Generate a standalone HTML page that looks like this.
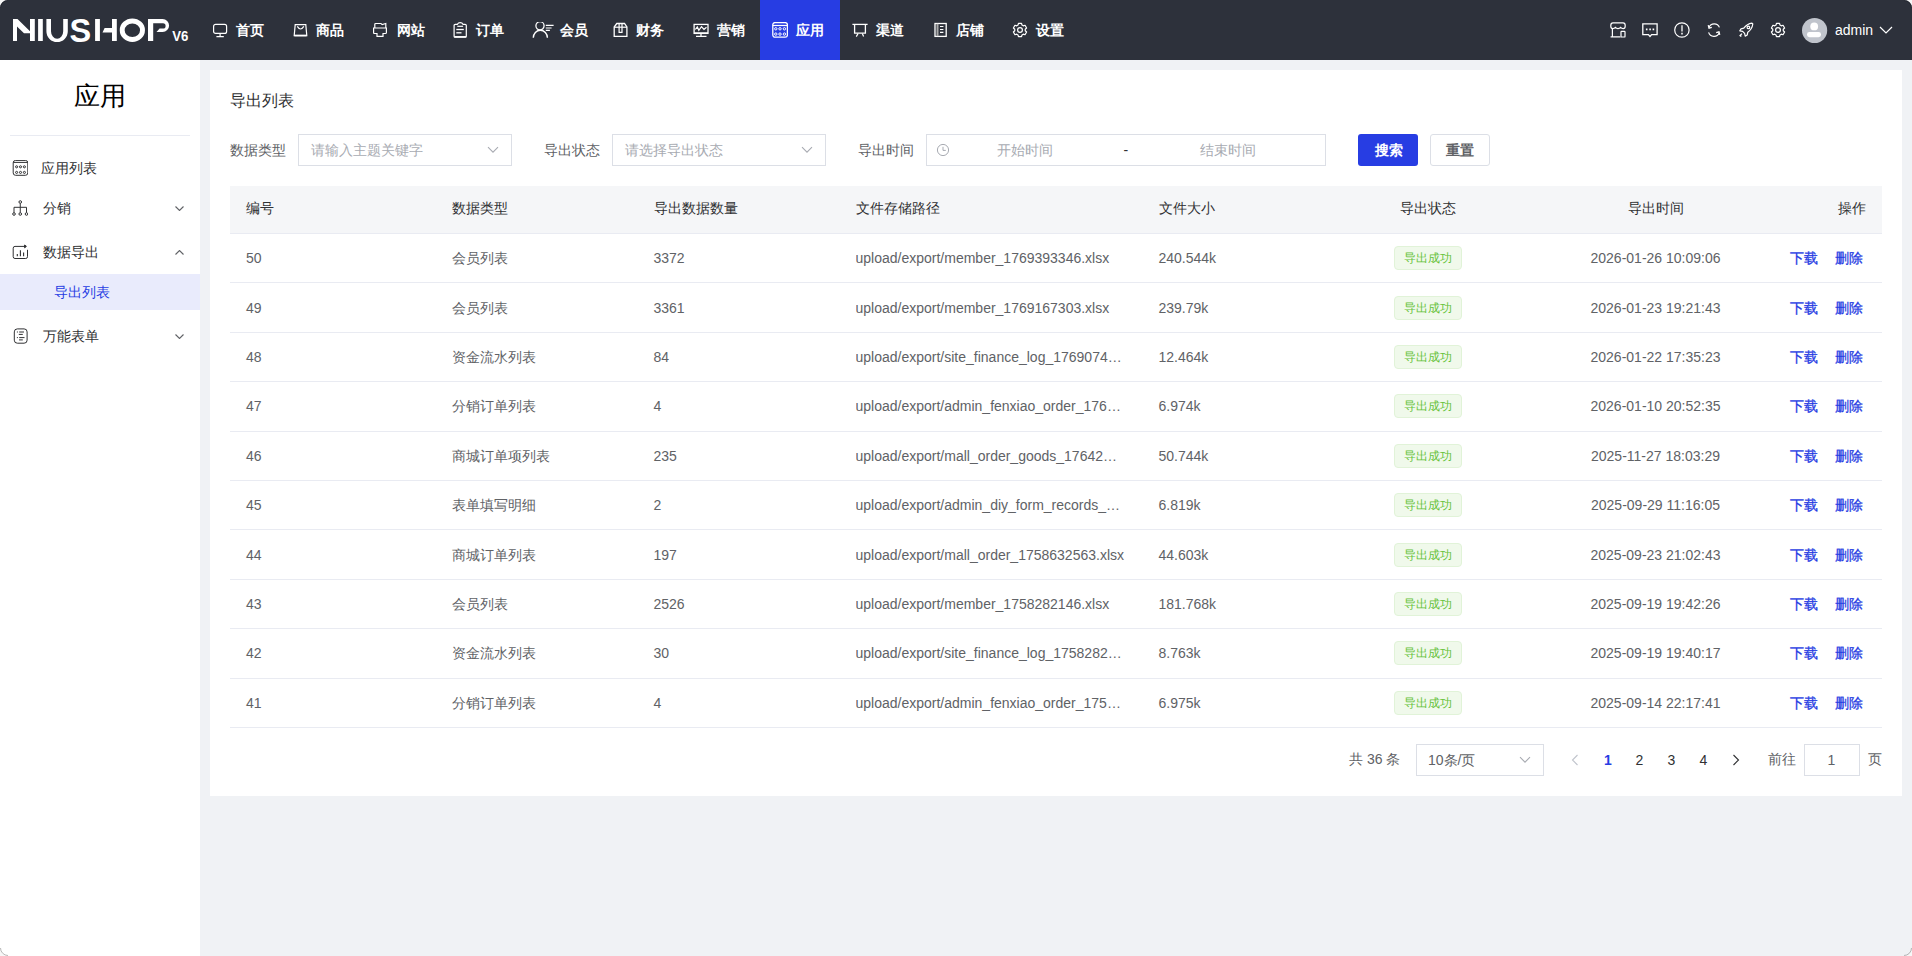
<!DOCTYPE html>
<html><head><meta charset="utf-8">
<style>
*{box-sizing:border-box;margin:0;padding:0}
html,body{width:1912px;height:956px;overflow:hidden}
body{font-family:"Liberation Sans",sans-serif;font-size:14px;color:#303133;background:#f0f2f5;position:relative}
.abs{position:absolute}
.t{position:absolute;white-space:nowrap;line-height:20px}
#hdr{position:absolute;left:0;top:0;width:1912px;height:60px;background:#2d313b}
.nav{position:absolute;top:0;height:60px;width:80px;color:#fff}
.nav.on{background:#273de3}
.nav svg{position:absolute;top:22px;width:16px;height:16px;fill:none;stroke:#fff;stroke-width:1.2}
.nav span{position:absolute;top:20px;line-height:20px;font-size:14px;font-weight:600}
.ri{position:absolute;top:22px;width:16px;height:16px;fill:none;stroke:#fff;stroke-width:1.2}
#side{position:absolute;left:0;top:60px;width:200px;height:896px;background:#fff}
.mi{position:absolute;left:0;width:200px;height:20px}
.mi svg{position:absolute;left:12px;top:2px;width:16px;height:16px;fill:none;stroke:#303133;stroke-width:1}
.mi span{position:absolute;left:43px;top:0;line-height:20px;color:#303133}
.chev{position:absolute;left:175px;width:9px;height:5px;fill:none;stroke:#606266;stroke-width:1.1}
#card{position:absolute;left:210px;top:70px;width:1692px;height:726px;background:#fff}
.lbl{color:#606266}
.inp{position:absolute;top:134px;height:32px;border:1px solid #dcdfe6;background:#fff}
.ph{color:#a8abb2}
.th{color:#303133;font-weight:400}
.td{color:#606266}
.path{width:269px;overflow:hidden;text-overflow:ellipsis}
.tag{position:absolute;width:68px;height:24px;border:1px solid #e1f3d8;background:#f0f9eb;border-radius:4px;color:#67c23a;font-size:12px;line-height:22px;text-align:center}
.op{color:#273de3;font-weight:400;-webkit-text-stroke:0.3px #273de3}
</style></head><body>
<div id="hdr">
<svg class="abs" style="left:0;top:0" width="200" height="60" viewBox="0 0 200 60">
<g fill="#fff">
<path d="M13 19H17.5L30 31.2V33.2H24L17 26.4V41H13Z"/>
<rect x="30" y="19" width="4.8" height="22"/>
<path d="M46.4 19V31.3A10.7 10.8 0 0 0 67.8 31.3V19H63.2V31.3A6.1 7.5 0 0 1 51 31.3V19Z"/>
<rect x="38.1" y="19" width="4.7" height="22"/>
<rect x="95.1" y="19" width="4.8" height="22"/>
<path d="M102.5 32.6L104.6 28H112V32.6Z"/>
<rect x="112" y="19" width="4.8" height="22"/>
<rect x="148" y="19" width="5.2" height="22"/>
<path d="M148 19H162.6A6.5 6.5 0 0 1 162.6 32H156.5L159.6 28.5H163A2.6 2.6 0 0 0 163 23.3H148Z"/>
</g>
<g fill="none" stroke="#fff">

<ellipse cx="132.35" cy="30.2" rx="10.15" ry="9.25" stroke-width="4.9"/>
</g>
<text x="69.6" y="41.6" font-family="Liberation Sans" font-weight="700" font-size="32.5" fill="#fff">S</text>
<text x="0" y="42" font-family="Liberation Sans" font-weight="700" font-size="15" fill="#fff" transform="translate(172.2 -0.8) scale(0.88 1)">V6</text>
</svg>

<div class="nav" style="left:200px"><svg style="left:12px" viewBox="0 0 16 16"><rect x="1.6" y="2.4" width="13" height="9" rx="2"/><path d="M8.1 11.4V14.4M4.4 14.6H11.8"/></svg><span style="left:36px">首页</span></div>
<div class="nav" style="left:280px"><svg style="left:13px" viewBox="0 0 16 16"><path d="M2.2 2.6H12.8L13.8 13.6H1.2Z"/><path d="M1.4 13.5H13.6" stroke-width="1.7"/><path d="M4.3 4.4Q7.55 9.6 10.8 4.4"/></svg><span style="left:36.4px">商品</span></div>
<div class="nav" style="left:360px"><svg style="left:12px" viewBox="0 0 16 16"><path d="M1.6 6H14.4V10.4Q14.4 11.5 13.4 11.5H11V14.4H5V11.5H2.6Q1.6 11.5 1.6 10.4Z"/><path d="M2.8 6V2.6Q2.8 1.5 3.8 1.5H9L10.2 2.6L13.8 1.5V6"/></svg><span style="left:37px">网站</span></div>
<div class="nav" style="left:440px"><svg style="left:13px" viewBox="0 0 16 16"><path d="M4.4 2.3H2.3Q1.1 2.3 1.1 3.5V14.2Q1.1 15.2 2.1 15.2H12.3Q13.3 15.2 13.3 14.2V3.5Q13.3 2.3 12.1 2.3H10Q9.2 0.6 7.2 0.6Q5.2 0.6 4.4 2.3Z"/><path d="M4.3 4.3H10.1"/><path d="M3.3 7.5H10.8" stroke-width="1.3"/><path d="M3.3 10.8H8.5" stroke-width="1.3"/><path d="M1.3 14.8H13.1" stroke-width="1.5"/></svg><span style="left:36.4px">订单</span></div>
<div class="nav" style="left:520px"><svg style="left:11.5px;width:24px" viewBox="0 0 24 16"><circle cx="8" cy="3.8" r="4.1" stroke-width="1.3"/><path d="M1.3 15.8A7 7.5 0 0 1 15.4 15.8" stroke-width="1.4"/><path d="M13.8 3.3H21.6M13.8 6H19.6M13.8 8.3H17.9" stroke-width="1.2"/></svg><span style="left:40.3px">会员</span></div>
<div class="nav" style="left:600px"><svg style="left:12.5px" viewBox="0 0 16 16"><path d="M1.2 5L3.8 1.5H11.5L13.9 5V14.4H1.2Z" stroke-width="1.3"/><path d="M1.2 5.2H13.9"/><path d="M6.1 1.6V10.4H9V1.6"/></svg><span style="left:36px">财务</span></div>
<div class="nav" style="left:680px"><svg style="left:12.5px" viewBox="0 0 16 16"><rect x="1.1" y="2.4" width="13.9" height="9" stroke-width="1.3"/><path d="M1.1 11.1H15" stroke-width="1.6"/><path d="M2.3 7.5L4.3 5L5.8 8.3L8.5 4.6L11 7.5L13.5 5.3"/><path d="M8 11.6V14M3 14.3H13.5" stroke-width="1.3"/></svg><span style="left:36.8px">营销</span></div>
<div class="nav on" style="left:760px"><svg style="left:12px" viewBox="0 0 16 16"><rect x="0.8" y="0.6" width="14.6" height="14.6" rx="2.2" stroke-width="1.3"/><path d="M0.8 3.5H15.4"/><circle cx="3.8" cy="6.8" r="1.2" stroke-width="1"/><circle cx="8" cy="6.8" r="1.2" stroke-width="1"/><circle cx="12.4" cy="6.8" r="1.2" stroke-width="1"/><circle cx="3.8" cy="12.1" r="1.2" stroke-width="1"/><circle cx="8" cy="12.1" r="1.2" stroke-width="1"/><circle cx="12.4" cy="12.1" r="1.2" stroke-width="1"/></svg><span style="left:36.4px">应用</span></div>
<div class="nav" style="left:840px"><svg style="left:12px" viewBox="0 0 16 16"><path d="M0.4 2.4H15.6" stroke-width="1.3"/><path d="M2.6 2.4V11.2H13.4V2.4" stroke-width="1.3"/><path d="M6 11.6L4.3 14.6M10.3 11.6L11.6 14.6"/></svg><span style="left:36px">渠道</span></div>
<div class="nav" style="left:920px"><svg style="left:13.5px" viewBox="0 0 16 16"><rect x="1" y="1.5" width="11.2" height="12.9" stroke-width="1.3"/><path d="M3.5 1.8V14.1" stroke="#aaa" stroke-width="2"/><path d="M6 4.5H9.4M6 7.5H9.4M6 10.4H9.4" stroke-width="1.2"/></svg><span style="left:36.4px">店铺</span></div>
<div class="nav" style="left:1000px"><svg style="left:12px" viewBox="0 0 16 16"><path d="M6.01 3.09 L6.45 1.28 L9.55 1.28 L9.99 3.09 L11.26 3.82 L13.05 3.29 L14.60 5.98 L13.25 7.26 L13.25 8.74 L14.60 10.02 L13.05 12.71 L11.26 12.18 L9.99 12.91 L9.55 14.72 L6.45 14.72 L6.01 12.91 L4.74 12.18 L2.95 12.71 L1.40 10.02 L2.75 8.74 L2.75 7.26 L1.40 5.98 L2.95 3.29 L4.74 3.82Z" stroke-linejoin="round"/><circle cx="8" cy="8" r="2.4"/></svg><span style="left:36.4px">设置</span></div>

<svg class="ri" style="left:1610px" viewBox="0 0 16 16"><path d="M3 0.8H13Q15.2 0.8 15.2 3.4V4.2Q15.2 6.6 13.2 6.6Q11.6 6.6 10.6 5.4Q9.6 6.6 8 6.6Q6.4 6.6 5.4 5.4Q4.4 6.6 2.8 6.6Q0.8 6.6 0.8 4.2V3.4Q0.8 0.8 3 0.8Z"/><path d="M2.4 6.6V14.8H10.4M0.6 14.8H10.4"/><rect x="11" y="9.4" width="4" height="5.6" rx="0.6"/></svg>
<svg class="ri" style="left:1642px" viewBox="0 0 16 16"><path d="M0.8 1.8H15.1V12.6H9.6L8 14.4L6.4 12.6H0.8Z" stroke-width="1.3"/><path d="M3.9 7.4H5.5M7.3 7.4H8.9M10.6 7.4H12.2" stroke-width="1.7"/></svg>
<svg class="ri" style="left:1674px" viewBox="0 0 16 16"><circle cx="7.9" cy="8" r="7.2" stroke-width="1.2"/><path d="M8 3.2V9.6" stroke-width="1.3"/><path d="M8 10.8V12.4" stroke-width="1.5"/></svg>
<svg class="ri" style="left:1706px" viewBox="0 0 16 16"><path d="M3 5.2A5.6 5.6 0 0 1 13.4 5.4M13.2 10.8A5.6 5.6 0 0 1 2.6 10.4"/><path d="M2.2 3.2L3 6.2L5.8 5.4" stroke-width="1.2"/><path d="M13.8 12.8L13 9.8L10.2 10.6" stroke-width="1.2"/></svg>
<svg class="ri" style="left:1738px" viewBox="0 0 16 16"><path d="M14 1.2Q9 1.8 5.8 6.2L3 6.8L1.8 8.8L4.6 9.4L6.6 11.4L7.2 14.2L9.2 13L9.8 10.2Q14.2 7 14.8 2Z" stroke-linejoin="round"/><circle cx="10.4" cy="5.4" r="1.3"/><path d="M4 11.6L1.6 14M3.4 13.6L2.4 14.6"/></svg>
<svg class="ri" style="left:1770px" viewBox="0 0 16 16"><path d="M6.01 3.09 L6.45 1.28 L9.55 1.28 L9.99 3.09 L11.26 3.82 L13.05 3.29 L14.60 5.98 L13.25 7.26 L13.25 8.74 L14.60 10.02 L13.05 12.71 L11.26 12.18 L9.99 12.91 L9.55 14.72 L6.45 14.72 L6.01 12.91 L4.74 12.18 L2.95 12.71 L1.40 10.02 L2.75 8.74 L2.75 7.26 L1.40 5.98 L2.95 3.29 L4.74 3.82Z" stroke-linejoin="round"/><circle cx="8" cy="8" r="2.4"/></svg>
<svg class="abs" style="left:1800px;top:16px" width="30" height="30" viewBox="0 0 30 30"><circle cx="14.6" cy="14.5" r="12.6" fill="#c0c4cc"/><circle cx="14.2" cy="10.4" r="3.9" fill="#fff"/><rect x="7" y="16" width="14" height="5.2" rx="2.4" fill="#fff"/></svg>
<div class="t" style="left:1835px;top:20px;color:#fff">admin</div>
<svg class="abs" style="left:1879px;top:26px" width="14" height="8" viewBox="0 0 14 8"><path d="M1 1L7 7L13 1" fill="none" stroke="#fff" stroke-width="1.2"/></svg>
</div>

<div id="side">
<div class="t" style="left:0;width:200px;text-align:center;top:21px;font-size:26px;line-height:30px;color:#000;font-weight:400">应用</div>
<div class="abs" style="left:10px;top:75px;width:180px;height:1px;background:#e9ebf2"></div>
<div class="mi" style="top:98px"><svg viewBox="0 0 16 16"><rect x="1.2" y="0.4" width="14.6" height="14.9" rx="2.4"/><path d="M1.2 2.4H15.8"/><circle cx="4.6" cy="6.8" r="1.05"/><circle cx="8.5" cy="6.8" r="1.05"/><circle cx="12.4" cy="6.8" r="1.05"/><circle cx="4.6" cy="12.4" r="1.05"/><circle cx="8.5" cy="12.4" r="1.05"/><circle cx="12.4" cy="12.4" r="1.05"/></svg><span style="left:41px">应用列表</span></div>
<div class="mi" style="top:138px"><svg viewBox="0 0 16 16"><circle cx="8.25" cy="2" r="1.3"/><path d="M8.25 3.3V7.3M2 12.7V7.3H14.5V12.7M8.25 7.3V12.7"/><circle cx="2" cy="14" r="1.3"/><circle cx="8.25" cy="14" r="1.3"/><circle cx="14.5" cy="14" r="1.3"/></svg><span>分销</span></div>
<svg class="chev" style="top:146px" viewBox="0 0 9 5"><path d="M0.5 0.5L4.5 4.5L8.5 0.5"/></svg>
<div class="mi" style="top:182px"><svg viewBox="0 0 16 16"><path d="M13.6 2.4H3Q1.2 2.4 1.2 4.2V12.7Q1.2 14.5 3 14.5H13.7Q15.5 14.5 15.5 12.7V5.8"/><path d="M12.6 1L14.4 2.4L12.6 3.8Z" fill="#303133"/><path d="M5.3 10V12.3M8.4 6.3V12.3M11.6 8.5V12.3" stroke-width="1.1"/></svg><span>数据导出</span></div>
<svg class="chev" style="top:190px" viewBox="0 0 9 5"><path d="M0.5 4.5L4.5 0.5L8.5 4.5"/></svg>
<div class="abs" style="left:0;top:214px;width:200px;height:36px;background:#e9ebfc"></div>
<div class="t" style="left:54px;top:222px;color:#273de3">导出列表</div>
<div class="mi" style="top:266px"><svg viewBox="0 0 16 16"><rect x="2.3" y="0.9" width="12.8" height="14.3" rx="3"/><path d="M4.9 4H5.9M7.2 4H12M6.8 6.4H10.8M4.9 9.6H5.9M7.2 9.6H12.5M7 11.9H10.8"/></svg><span>万能表单</span></div>
<svg class="chev" style="top:274px" viewBox="0 0 9 5"><path d="M0.5 0.5L4.5 4.5L8.5 0.5"/></svg>
</div>

<div id="card">
<div class="t" style="left:20px;top:21px;font-size:16px;line-height:20px;color:#303133">导出列表</div>
</div>

<div class="t lbl" style="left:230px;top:140px">数据类型</div>
<div class="inp" style="left:298px;width:214px"></div>
<div class="t ph" style="left:310.5px;top:140px">请输入主题关键字</div>
<svg class="abs" style="left:487px;top:146px" width="12" height="8" viewBox="0 0 12 8"><path d="M1 1.2L6 6.2L11 1.2" fill="none" stroke="#a8abb2" stroke-width="1.1"/></svg>
<div class="t lbl" style="left:544px;top:140px">导出状态</div>
<div class="inp" style="left:612px;width:214px"></div>
<div class="t ph" style="left:624.5px;top:140px">请选择导出状态</div>
<svg class="abs" style="left:801px;top:146px" width="12" height="8" viewBox="0 0 12 8"><path d="M1 1.2L6 6.2L11 1.2" fill="none" stroke="#a8abb2" stroke-width="1.1"/></svg>
<div class="t lbl" style="left:858px;top:140px">导出时间</div>
<div class="inp" style="left:926px;width:400px"></div>
<svg class="abs" style="left:936px;top:143px" width="14" height="14" viewBox="0 0 14 14"><circle cx="7" cy="7" r="5.6" fill="none" stroke="#a8abb2" stroke-width="1"/><path d="M7 3.8V7.4H9.8" fill="none" stroke="#a8abb2" stroke-width="1"/></svg>
<div class="t ph" style="left:996.5px;top:140px">开始时间</div>
<div class="t" style="left:1123.5px;top:140px;color:#303133">-</div>
<div class="t ph" style="left:1200px;top:140px">结束时间</div>
<div class="abs" style="left:1358px;top:134px;width:60px;height:32px;background:#273de3;border-radius:3px"></div>
<div class="t" style="left:1374.5px;top:140px;color:#fff;font-weight:600">搜索</div>
<div class="abs" style="left:1430px;top:134px;width:60px;height:32px;border:1px solid #dcdfe6;border-radius:3px;background:#fff"></div>
<div class="t" style="left:1446px;top:140px;color:#606266;font-weight:600">重置</div>

<div class="abs" style="left:230px;top:186px;width:1652px;height:47px;background:#f5f6f8"></div>
<div class="abs" style="left:230px;top:233px;width:1652px;height:1px;background:#e9ebf2"></div>
<div class="t th" style="left:246px;top:198px">编号</div>
<div class="t th" style="left:452px;top:198px">数据类型</div>
<div class="t th" style="left:653.5px;top:198px">导出数据数量</div>
<div class="t th" style="left:855.5px;top:198px">文件存储路径</div>
<div class="t th" style="left:1158.5px;top:198px">文件大小</div>
<div class="t th" style="left:1328px;width:200px;text-align:center;top:198px">导出状态</div>
<div class="t th" style="left:1555.5px;width:200px;text-align:center;top:198px">导出时间</div>
<div class="t th" style="left:1666px;width:200px;text-align:right;top:198px">操作</div>
<div class="abs" style="left:230px;top:282px;width:1652px;height:1px;background:#e9ebf2"></div>
<div class="t td" style="left:246px;top:248.2px">50</div>
<div class="t td" style="left:452px;top:248.2px">会员列表</div>
<div class="t td" style="left:653.5px;top:248.2px">3372</div>
<div class="t td path" style="left:855.5px;top:248.2px">upload/export/member_1769393346.xlsx</div>
<div class="t td" style="left:1158.5px;top:248.2px">240.544k</div>
<div class="tag" style="left:1394px;top:246.2px">导出成功</div>
<div class="t td" style="left:1555.5px;width:200px;text-align:center;top:248.2px">2026-01-26 10:09:06</div>
<div class="t op" style="left:1789.5px;top:248.2px">下载</div>
<div class="t op" style="left:1835px;top:248.2px">删除</div>
<div class="abs" style="left:230px;top:332px;width:1652px;height:1px;background:#e9ebf2"></div>
<div class="t td" style="left:246px;top:297.6px">49</div>
<div class="t td" style="left:452px;top:297.6px">会员列表</div>
<div class="t td" style="left:653.5px;top:297.6px">3361</div>
<div class="t td path" style="left:855.5px;top:297.6px">upload/export/member_1769167303.xlsx</div>
<div class="t td" style="left:1158.5px;top:297.6px">239.79k</div>
<div class="tag" style="left:1394px;top:295.6px">导出成功</div>
<div class="t td" style="left:1555.5px;width:200px;text-align:center;top:297.6px">2026-01-23 19:21:43</div>
<div class="t op" style="left:1789.5px;top:297.6px">下载</div>
<div class="t op" style="left:1835px;top:297.6px">删除</div>
<div class="abs" style="left:230px;top:381px;width:1652px;height:1px;background:#e9ebf2"></div>
<div class="t td" style="left:246px;top:347.0px">48</div>
<div class="t td" style="left:452px;top:347.0px">资金流水列表</div>
<div class="t td" style="left:653.5px;top:347.0px">84</div>
<div class="t td path" style="left:855.5px;top:347.0px">upload/export/site_finance_log_1769074000.xlsx</div>
<div class="t td" style="left:1158.5px;top:347.0px">12.464k</div>
<div class="tag" style="left:1394px;top:345.0px">导出成功</div>
<div class="t td" style="left:1555.5px;width:200px;text-align:center;top:347.0px">2026-01-22 17:35:23</div>
<div class="t op" style="left:1789.5px;top:347.0px">下载</div>
<div class="t op" style="left:1835px;top:347.0px">删除</div>
<div class="abs" style="left:230px;top:431px;width:1652px;height:1px;background:#e9ebf2"></div>
<div class="t td" style="left:246px;top:396.4px">47</div>
<div class="t td" style="left:452px;top:396.4px">分销订单列表</div>
<div class="t td" style="left:653.5px;top:396.4px">4</div>
<div class="t td path" style="left:855.5px;top:396.4px">upload/export/admin_fenxiao_order_1768049555.xlsx</div>
<div class="t td" style="left:1158.5px;top:396.4px">6.974k</div>
<div class="tag" style="left:1394px;top:394.4px">导出成功</div>
<div class="t td" style="left:1555.5px;width:200px;text-align:center;top:396.4px">2026-01-10 20:52:35</div>
<div class="t op" style="left:1789.5px;top:396.4px">下载</div>
<div class="t op" style="left:1835px;top:396.4px">删除</div>
<div class="abs" style="left:230px;top:480px;width:1652px;height:1px;background:#e9ebf2"></div>
<div class="t td" style="left:246px;top:445.8px">46</div>
<div class="t td" style="left:452px;top:445.8px">商城订单项列表</div>
<div class="t td" style="left:653.5px;top:445.8px">235</div>
<div class="t td path" style="left:855.5px;top:445.8px">upload/export/mall_order_goods_1764237809.xlsx</div>
<div class="t td" style="left:1158.5px;top:445.8px">50.744k</div>
<div class="tag" style="left:1394px;top:443.8px">导出成功</div>
<div class="t td" style="left:1555.5px;width:200px;text-align:center;top:445.8px">2025-11-27 18:03:29</div>
<div class="t op" style="left:1789.5px;top:445.8px">下载</div>
<div class="t op" style="left:1835px;top:445.8px">删除</div>
<div class="abs" style="left:230px;top:529px;width:1652px;height:1px;background:#e9ebf2"></div>
<div class="t td" style="left:246px;top:495.2px">45</div>
<div class="t td" style="left:452px;top:495.2px">表单填写明细</div>
<div class="t td" style="left:653.5px;top:495.2px">2</div>
<div class="t td path" style="left:855.5px;top:495.2px">upload/export/admin_diy_form_records_1759115765.xlsx</div>
<div class="t td" style="left:1158.5px;top:495.2px">6.819k</div>
<div class="tag" style="left:1394px;top:493.2px">导出成功</div>
<div class="t td" style="left:1555.5px;width:200px;text-align:center;top:495.2px">2025-09-29 11:16:05</div>
<div class="t op" style="left:1789.5px;top:495.2px">下载</div>
<div class="t op" style="left:1835px;top:495.2px">删除</div>
<div class="abs" style="left:230px;top:579px;width:1652px;height:1px;background:#e9ebf2"></div>
<div class="t td" style="left:246px;top:544.6px">44</div>
<div class="t td" style="left:452px;top:544.6px">商城订单列表</div>
<div class="t td" style="left:653.5px;top:544.6px">197</div>
<div class="t td path" style="left:855.5px;top:544.6px">upload/export/mall_order_1758632563.xlsx</div>
<div class="t td" style="left:1158.5px;top:544.6px">44.603k</div>
<div class="tag" style="left:1394px;top:542.6px">导出成功</div>
<div class="t td" style="left:1555.5px;width:200px;text-align:center;top:544.6px">2025-09-23 21:02:43</div>
<div class="t op" style="left:1789.5px;top:544.6px">下载</div>
<div class="t op" style="left:1835px;top:544.6px">删除</div>
<div class="abs" style="left:230px;top:628px;width:1652px;height:1px;background:#e9ebf2"></div>
<div class="t td" style="left:246px;top:594.0px">43</div>
<div class="t td" style="left:452px;top:594.0px">会员列表</div>
<div class="t td" style="left:653.5px;top:594.0px">2526</div>
<div class="t td path" style="left:855.5px;top:594.0px">upload/export/member_1758282146.xlsx</div>
<div class="t td" style="left:1158.5px;top:594.0px">181.768k</div>
<div class="tag" style="left:1394px;top:592.0px">导出成功</div>
<div class="t td" style="left:1555.5px;width:200px;text-align:center;top:594.0px">2025-09-19 19:42:26</div>
<div class="t op" style="left:1789.5px;top:594.0px">下载</div>
<div class="t op" style="left:1835px;top:594.0px">删除</div>
<div class="abs" style="left:230px;top:678px;width:1652px;height:1px;background:#e9ebf2"></div>
<div class="t td" style="left:246px;top:643.4px">42</div>
<div class="t td" style="left:452px;top:643.4px">资金流水列表</div>
<div class="t td" style="left:653.5px;top:643.4px">30</div>
<div class="t td path" style="left:855.5px;top:643.4px">upload/export/site_finance_log_1758282017.xlsx</div>
<div class="t td" style="left:1158.5px;top:643.4px">8.763k</div>
<div class="tag" style="left:1394px;top:641.4px">导出成功</div>
<div class="t td" style="left:1555.5px;width:200px;text-align:center;top:643.4px">2025-09-19 19:40:17</div>
<div class="t op" style="left:1789.5px;top:643.4px">下载</div>
<div class="t op" style="left:1835px;top:643.4px">删除</div>
<div class="abs" style="left:230px;top:727px;width:1652px;height:1px;background:#e9ebf2"></div>
<div class="t td" style="left:246px;top:692.8px">41</div>
<div class="t td" style="left:452px;top:692.8px">分销订单列表</div>
<div class="t td" style="left:653.5px;top:692.8px">4</div>
<div class="t td path" style="left:855.5px;top:692.8px">upload/export/admin_fenxiao_order_1757859461.xlsx</div>
<div class="t td" style="left:1158.5px;top:692.8px">6.975k</div>
<div class="tag" style="left:1394px;top:690.8px">导出成功</div>
<div class="t td" style="left:1555.5px;width:200px;text-align:center;top:692.8px">2025-09-14 22:17:41</div>
<div class="t op" style="left:1789.5px;top:692.8px">下载</div>
<div class="t op" style="left:1835px;top:692.8px">删除</div>

<div class="t lbl" style="left:1349px;top:749px">共 36 条</div>
<div class="inp" style="left:1416px;top:744px;width:128px"></div>
<div class="t" style="left:1428px;top:750px;color:#606266">10条/页</div>
<svg class="abs" style="left:1519px;top:756px" width="12" height="8" viewBox="0 0 12 8"><path d="M1 1.2L6 6.2L11 1.2" fill="none" stroke="#a8abb2" stroke-width="1.1"/></svg>
<svg class="abs" style="left:1571px;top:754px" width="8" height="12" viewBox="0 0 8 12"><path d="M6.5 1L1.5 6L6.5 11" fill="none" stroke="#c0c4cc" stroke-width="1.1"/></svg>
<div class="t" style="left:1604px;top:750px;color:#273de3;font-weight:700">1</div>
<div class="t" style="left:1635.5px;top:750px;color:#303133">2</div>
<div class="t" style="left:1667.5px;top:750px;color:#303133">3</div>
<div class="t" style="left:1699.5px;top:750px;color:#303133">4</div>
<svg class="abs" style="left:1732px;top:754px" width="8" height="12" viewBox="0 0 8 12"><path d="M1.5 1L6.5 6L1.5 11" fill="none" stroke="#303133" stroke-width="1.1"/></svg>
<div class="t lbl" style="left:1768px;top:749px">前往</div>
<div class="inp" style="left:1804px;top:744px;width:56px"></div>
<div class="t" style="left:1827.5px;top:750px;color:#606266">1</div>
<div class="t lbl" style="left:1868px;top:749px">页</div>

<svg class="abs" style="left:0;top:0" width="10" height="10" viewBox="0 0 10 10"><path d="M0 0H8A8 8 0 0 0 0 8Z" fill="#f7f7f7"/><path d="M8 0.5A7.5 7.5 0 0 0 0.5 8" fill="none" stroke="#1e2129" stroke-width="1" opacity="0.6"/></svg>
<svg class="abs" style="left:1902px;top:0" width="10" height="10" viewBox="0 0 10 10"><path d="M10 0H2A8 8 0 0 1 10 8Z" fill="#f7f7f7"/><path d="M2 0.5A7.5 7.5 0 0 1 9.5 8" fill="none" stroke="#1e2129" stroke-width="1" opacity="0.6"/></svg>
<svg class="abs" style="left:0;top:946px" width="10" height="10" viewBox="0 0 10 10"><path d="M0 10H8A8 8 0 0 1 0 2Z" fill="#f7f7f7"/><path d="M8 9.5A7.5 7.5 0 0 1 0.5 2" fill="none" stroke="#9a9a9a" stroke-width="1" opacity="0.7"/></svg>
<svg class="abs" style="left:1902px;top:946px" width="10" height="10" viewBox="0 0 10 10"><path d="M10 10H2A8 8 0 0 0 10 2Z" fill="#f7f7f7"/><path d="M2 9.5A7.5 7.5 0 0 0 9.5 2" fill="none" stroke="#9a9a9a" stroke-width="1" opacity="0.7"/></svg>
</body></html>
